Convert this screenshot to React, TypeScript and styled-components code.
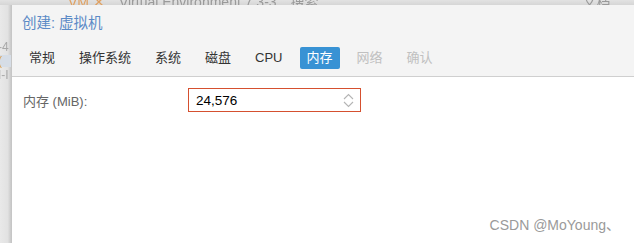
import React, { useState } from "react";
import styled, { createGlobalStyle } from "styled-components";

const GlobalStyle = createGlobalStyle`
    html, body {
        margin: 0;
        padding: 0;
        width: 634px;
        height: 243px;
        overflow: hidden;
        font-family: "Liberation Sans", "Noto Sans CJK SC", Arial, sans-serif;
        background: #dcdcdc;
    }
`;

const Screen = styled.div`
    width: 634px;
    height: 243px;
    display: grid;
    grid-template-columns: 11px 1fr;
    grid-template-rows: 5px 1fr;
    background: #e4e4e4;
`;

const TopBar = styled.div`
    grid-column: 1 / 3;
    overflow: hidden;
    background: linear-gradient(#e2e2e2, #d6d6d6);
    display: flex;
    align-items: flex-end;
    gap: 14px;
    padding-left: 68px;
    font-size: 14px;
    color: #9a9a9a;
    line-height: 5px;
    white-space: nowrap;
    filter: blur(0.4px);
`;

const SideStrip = styled.div`
    overflow: hidden;
    background: linear-gradient(90deg, #e9e9e9 0%, #e2e2e2 70%, #c9c9c9 100%);
    display: flex;
    flex-direction: column;
    padding-top: 36px;
    gap: 2px;
    font-size: 12px;
    color: #a8a8a8;
    white-space: nowrap;
    filter: blur(0.3px);
`;

const SideItem = styled.span<{ $tone?: string }>`
    display: block;
    height: 12px;
    line-height: 12px;
    margin-left: -2px;
    color: ${(p) => p.$tone || "#a8a8a8"};
    background: ${(p) => (p.$tone ? "#d6dde6" : "transparent")};
`;

const Dialog = styled.div`
    display: flex;
    flex-direction: column;
    background: #ffffff;
    border-left: 1px solid #c6c6c6;
    box-shadow: -2px 0 3px rgba(0, 0, 0, 0.12);
`;

const Header = styled.div`
    background: #f4f4f4;
    border-bottom: 1px solid #cfcfcf;
    padding: 10px 0 7px 10px;
`;

const Title = styled.div`
    font-size: 14.5px;
    line-height: 16px;
    color: #5b8ac6;
    padding-bottom: 16px;
`;

const Tabs = styled.div`
    display: flex;
    gap: 10px;
`;

const Tab = styled.div<{ $active?: boolean; $disabled?: boolean }>`
    padding: 3px 7px;
    height: 16px;
    line-height: 16px;
    font-size: 13px;
    border-radius: 2px;
    color: ${(p) => (p.$active ? "#ffffff" : p.$disabled ? "#c0c0c0" : "#333333")};
    background: ${(p) => (p.$active ? "#3892d4" : "transparent")};
    cursor: ${(p) => (p.$disabled ? "default" : "pointer")};
`;

const Body = styled.div`
    flex: 1;
    padding: 11px 0 0 11px;
    position: relative;
`;

const FormRow = styled.div`
    display: flex;
    align-items: center;
`;

const Label = styled.label`
    width: 165px;
    font-size: 13px;
    color: #666666;
`;

const NumberField = styled.div`
    width: 158px;
    height: 22px;
    border: 1px solid #d5502f;
    display: flex;
    align-items: center;
    justify-content: space-between;
    padding: 0 6px 0 7px;
    box-sizing: content-box;
`;

const NumberInput = styled.input`
    border: none;
    outline: none;
    background: transparent;
    font-family: "Liberation Sans", Arial, sans-serif;
    font-size: 13.5px;
    color: #000000;
    width: 120px;
    padding: 0;
`;

const Spinner = styled.div`
    display: flex;
    flex-direction: column;
    gap: 1px;
`;

const Watermark = styled.div`
    position: absolute;
    right: 14px;
    bottom: 9px;
    font-size: 14px;
    color: #9a9a9a;
    font-family: "Liberation Sans", "Noto Sans CJK SC", sans-serif;
`;

const tabs = ["常规", "操作系统", "系统", "磁盘", "CPU", "内存", "网络", "确认"];

export default function App() {
    const [memory, setMemory] = useState<string>("24,576");
    const activeIndex = 5;

    return (
        <Screen>
            <GlobalStyle />
            <TopBar>
                <span style={{ color: "#e0a060" }}>VM ✕</span>
                <span>Virtual Environment 7.3-3</span>
                <span>搜索</span>
                <span style={{ marginLeft: 250 }}>文档</span>
            </TopBar>
            <SideStrip>
                <SideItem>-4</SideItem>
                <SideItem $tone="#d9a35a">(</SideItem>
                <SideItem>I-I</SideItem>
            </SideStrip>
            <Dialog>
                <Header>
                    <Title>创建: 虚拟机</Title>
                    <Tabs>
                        {tabs.map((t, i) => (
                            <Tab key={t} $active={i === activeIndex} $disabled={i > activeIndex}>
                                {t}
                            </Tab>
                        ))}
                    </Tabs>
                </Header>
                <Body>
                    <FormRow>
                        <Label htmlFor="memoryInput">内存 (MiB):</Label>
                        <NumberField>
                            <NumberInput
                                id="memoryInput"
                                value={memory}
                                onChange={(e) => setMemory(e.target.value)}
                            />
                            <Spinner>
                                <svg width="11" height="7" viewBox="0 0 11 7">
                                    <path d="M1 6 L5.5 1.5 L10 6" fill="none" stroke="#b4b4b4" strokeWidth="1.1" />
                                </svg>
                                <svg width="11" height="7" viewBox="0 0 11 7">
                                    <path d="M1 1 L5.5 5.5 L10 1" fill="none" stroke="#b4b4b4" strokeWidth="1.1" />
                                </svg>
                            </Spinner>
                        </NumberField>
                    </FormRow>
                    <Watermark>CSDN @MoYoung、</Watermark>
                </Body>
            </Dialog>
        </Screen>
    );
}
